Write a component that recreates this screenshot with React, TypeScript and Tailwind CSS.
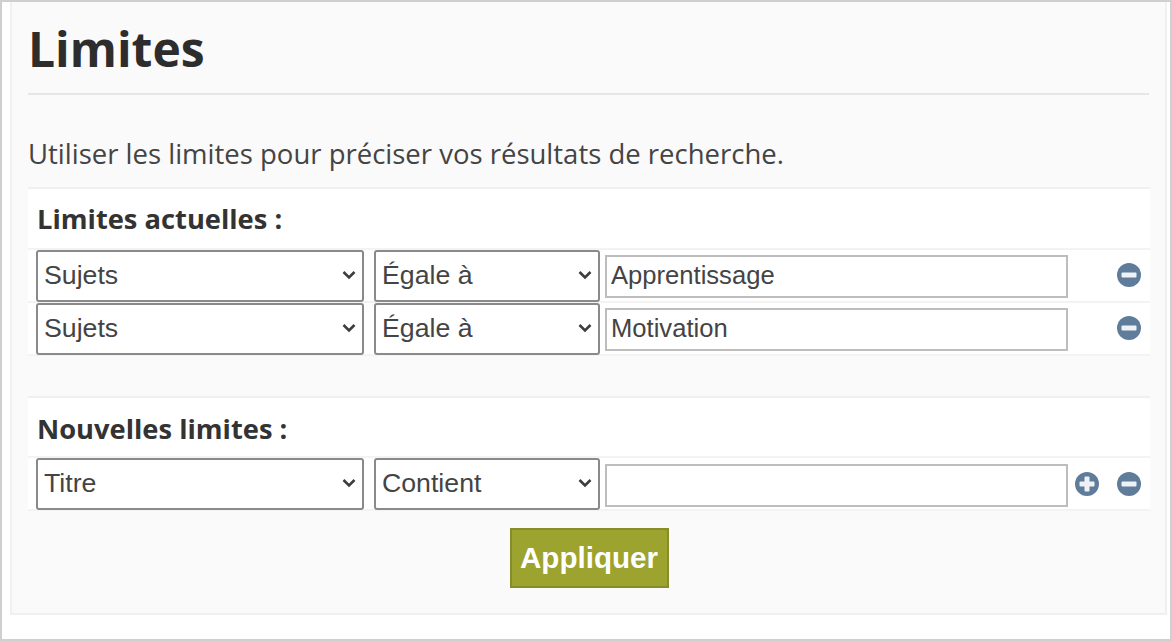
import React from 'react';

const Dropdown = ({ value, width }: { value: string; width: string }) => {
  return (
    <div className={`relative ${width} h-[52px] shrink-0`}>
      <select
        defaultValue={value}
        className="appearance-none w-full h-full bg-white border-2 border-[#8a8a8a] rounded-[3px] pl-[6px] pr-6 pb-[2px] text-[26.7px] text-[#444] font-['Liberation_Sans',sans-serif] outline-none"
      >
        <option>{value}</option>
      </select>
      <svg className="absolute right-[8px] top-[20px] w-[14px] h-[10px] pointer-events-none" viewBox="0 0 14 10" fill="none">
        <path d="M1.5 2 L7 7.5 L12.5 2" stroke="#3d3d3d" strokeWidth="2.6" />
      </svg>
    </div>
  );
};

const RoundIcon = ({ plus }: { plus?: boolean }) => {
  return (
    <svg className="w-6 h-6 shrink-0" viewBox="0 0 24 24">
      <circle cx="12" cy="12" r="12" fill="#5f7d9b" />
      <rect x="4.5" y="9.5" width="15" height="5" rx="1" fill="#eef2f5" />
      {plus && <rect x="9.5" y="4.5" width="5" height="15" rx="1" fill="#eef2f5" />}
    </svg>
  );
};

const LimitRow = ({ field, op, text, plus }: { field: string; op: string; text: string; plus?: boolean }) => {
  return (
    <div className="h-[53px] border-b-2 border-[#f3f3f3] flex items-start pl-2 bg-white">
      <Dropdown value={field} width="w-[328px]" />
      <div className="w-[10px] shrink-0" />
      <Dropdown value={op} width="w-[226px]" />
      <input
        defaultValue={text}
        className={`ml-[5px] ${plus ? 'mt-[6px]' : 'mt-[5px]'} w-[463px] h-[43px] shrink-0 bg-white border-2 border-[#bdbdbd] px-[4px] pb-[2px] text-[25.6px] text-[#444] font-['Liberation_Sans',sans-serif] outline-none`}
      />
      <div className="w-[7px] shrink-0" />
      <div className={`w-6 ${plus ? 'mt-[14px]' : 'mt-[13px]'} shrink-0`}>{plus && <RoundIcon plus />}</div>
      <div className="w-[18px] shrink-0" />
      <div className={`${plus ? 'mt-[14px]' : 'mt-[13px]'} shrink-0`}>
        <RoundIcon />
      </div>
    </div>
  );
};

export default function App() {
  return (
    <div className="w-[1172px] h-[641px] bg-white border-2 border-[#cfcfcf] pl-2 pr-[3px] pb-6 overflow-hidden font-['Open_Sans',sans-serif]">
      <div className="h-full bg-[#fafafa] border-l-2 border-r-2 border-b-2 border-[#f0f0f0] px-4">
        {/* Title */}
        <h1 className="h-[93px] pt-[17px] text-[48px] leading-[60px] font-bold text-[#2d2d2d] border-b-2 border-[#e6e6e6]">
          Limites
        </h1>
        <p className="mt-[37px] h-[55px] text-[27.5px] leading-[44px] text-[#444]">
          Utiliser les limites pour préciser vos résultats de recherche.
        </p>

        {/* Current limits */}
        <div className="w-[1122px] border-t-2 border-[#f0f0f0]">
          <div className="h-[61px] bg-white border-b-2 border-[#f3f3f3] pl-[9px] pt-[11px] text-[27.3px] leading-[38px] font-bold text-[#333]">
            Limites actuelles :
          </div>
          <LimitRow field="Sujets" op="Égale à" text="Apprentissage" />
          <LimitRow field="Sujets" op="Égale à" text="Motivation" />
        </div>

        {/* New limits */}
        <div className="w-[1122px] mt-[40px] border-t-2 border-[#f0f0f0]">
          <div className="h-[60px] bg-white border-b-2 border-[#f3f3f3] pl-[9px] pt-[12px] text-[27.3px] leading-[38px] font-bold text-[#333]">
            Nouvelles limites :
          </div>
          <LimitRow field="Titre" op="Contient" text="" plus />
        </div>

        <div className="w-[1122px] flex justify-center mt-[17px]">
          <button className="w-[159px] h-[60px] bg-[#9ca32f] border-2 border-[#868c28] text-white text-[29.6px] font-bold font-['Liberation_Sans',sans-serif]">
            Appliquer
          </button>
        </div>
      </div>
    </div>
  );
}
